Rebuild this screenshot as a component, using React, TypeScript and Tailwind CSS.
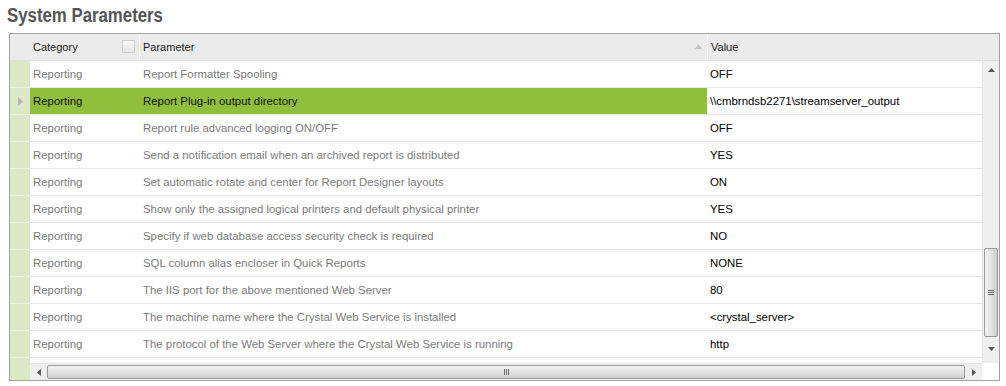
import React from "react";

const rows: [string, string][] = [
  ["Report Formatter Spooling", "OFF"],
  ["Report Plug-in output directory", "\\\\cmbrndsb2271\\streamserver_output"],
  ["Report rule advanced logging ON/OFF", "OFF"],
  ["Send a notification email when an archived report is distributed", "YES"],
  ["Set automatic rotate and center for Report Designer layouts", "ON"],
  ["Show only the assigned logical printers and default physical printer", "YES"],
  ["Specify if web database access security check is required", "NO"],
  ["SQL column alias encloser in Quick Reports", "NONE"],
  ["The IIS port for the above mentioned Web Server", "80"],
  ["The machine name where the Crystal Web Service is installed", "<crystal_server>"],
  ["The protocol of the Web Server where the Crystal Web Service is running", "http"],
];

const SEL = 1;

export default function App() {
  return (
    <div
      className="w-[1006px] h-[386px] bg-white overflow-hidden"
      style={{ fontFamily: '"Liberation Sans", Arial, sans-serif' }}
    >
      <div className="h-[33px] pl-[7px] pt-[2px]">
        <div className="text-[20px] leading-[26px] font-bold text-[#555557] scale-x-[0.84] origin-left whitespace-nowrap">
          System Parameters
        </div>
      </div>
      <div className="ml-[9px] w-[991px] h-[348px] border border-[#a3a3a3] flex flex-col text-[11.4px]">
        {/* header */}
        <div className="h-[27px] flex bg-[#ebebeb] border-b border-[#e0e0e0] text-[#1a1a1a] text-[11px]">
          <div className="w-[20px]" />
          <div className="w-[109px] flex items-center pl-[3px] relative">
            <span>Category</span>
            <div className="absolute left-[92px] top-[6px] w-[13px] h-[13px] border border-[#cfcfcf] bg-gradient-to-b from-[#fafafa] to-[#e6e6e6]" />
          </div>
          <div className="w-[1px] bg-white" />
          <div className="w-[567px] flex items-center pl-[3px] relative">
            <span>Parameter</span>
            <svg className="absolute left-[555px] top-[10px]" width="7" height="5" viewBox="0 0 7 5">
              <path d="M0 5 L3.5 0 L7 5 Z" fill="#c4c4c4" />
            </svg>
          </div>
          <div className="w-[1px] bg-white" />
          <div className="flex-1 flex items-center pl-[3px]">Value</div>
        </div>
        <div className="flex flex-1 min-h-0">
          {/* indicator column */}
          <div className="w-[20px] bg-[#dde8c6] flex flex-col">
            {rows.map((_, i) => (
              <div key={i} className="h-[27px] border-b border-[#eaf1dc] flex items-center justify-center">
                {i === SEL && (
                  <svg width="5" height="9" viewBox="0 0 5 9">
                    <path d="M0 0 L5 4.5 L0 9 Z" fill="#b5b5b5" />
                  </svg>
                )}
              </div>
            ))}
          </div>
          {/* main */}
          <div className="flex-1 flex flex-col min-w-0">
            <div className="flex flex-1 min-h-0">
              <div className="flex-1 flex flex-col overflow-hidden">
                {rows.map(([p, v], i) => {
                  const sel = i === SEL;
                  return (
                    <div key={i} className="h-[27px] shrink-0 flex border-b border-[#e6e6e6]">
                      <div
                        className={`w-[677px] flex items-center pt-[2px] ${sel ? "bg-[#8fbf3c] text-[#111]" : "text-[#7a7a7a]"}`}
                      >
                        <div className="w-[110px] pl-[3px]">Reporting</div>
                        <div className="flex-1 pl-[3px] whitespace-nowrap">{p}</div>
                      </div>
                      <div className="flex-1 flex items-center pt-[2px] pl-[3px] text-black whitespace-nowrap">{v}</div>
                    </div>
                  );
                })}
              </div>
              {/* vertical scrollbar */}
              <div className="w-[17px] bg-[#efefef] border-l border-[#e4e4e4] flex flex-col items-center">
                <div className="h-[17px] flex items-center justify-center">
                  <svg width="7" height="4" viewBox="0 0 7 4">
                    <path d="M0 4 L3.5 0 L7 4 Z" fill="#555" />
                  </svg>
                </div>
                <div className="flex-1" />
                <div className="w-[14px] h-[89px] mb-[4px] rounded-[2px] border border-[#9a9a9a] bg-gradient-to-r from-[#f2f2f2] via-[#e2e2e2] to-[#cfcfcf] flex flex-col items-center justify-center gap-[1px]">
                  <div className="w-[6px] h-[1px] bg-[#666]" />
                  <div className="w-[6px] h-[1px] bg-[#666]" />
                  <div className="w-[6px] h-[1px] bg-[#666]" />
                </div>
                <div className="h-[22px] flex items-start pt-[6px] justify-center">
                  <svg width="7" height="4" viewBox="0 0 7 4">
                    <path d="M0 0 L3.5 4 L7 0 Z" fill="#555" />
                  </svg>
                </div>
              </div>
            </div>
            {/* horizontal scrollbar */}
            <div className="h-[17px] shrink-0 flex">
              <div className="flex-1 flex items-center bg-[#efefef] border-t border-[#e4e4e4]">
                <div className="w-[17px] flex items-center justify-center">
                  <svg width="4" height="7" viewBox="0 0 4 7">
                    <path d="M4 0 L0 3.5 L4 7 Z" fill="#555" />
                  </svg>
                </div>
                <div className="flex-1 h-[14px] rounded-[2px] border border-[#9a9a9a] bg-gradient-to-b from-[#f2f2f2] via-[#e2e2e2] to-[#cfcfcf] flex items-center justify-center gap-[1px]">
                  <div className="w-[1px] h-[6px] bg-[#666]" />
                  <div className="w-[1px] h-[6px] bg-[#666]" />
                  <div className="w-[1px] h-[6px] bg-[#666]" />
                </div>
                <div className="w-[17px] flex items-center justify-center">
                  <svg width="4" height="7" viewBox="0 0 4 7">
                    <path d="M0 0 L4 3.5 L0 7 Z" fill="#555" />
                  </svg>
                </div>
              </div>
              <div className="w-[17px] bg-white" />
            </div>
          </div>
        </div>
      </div>
    </div>
  );
}
